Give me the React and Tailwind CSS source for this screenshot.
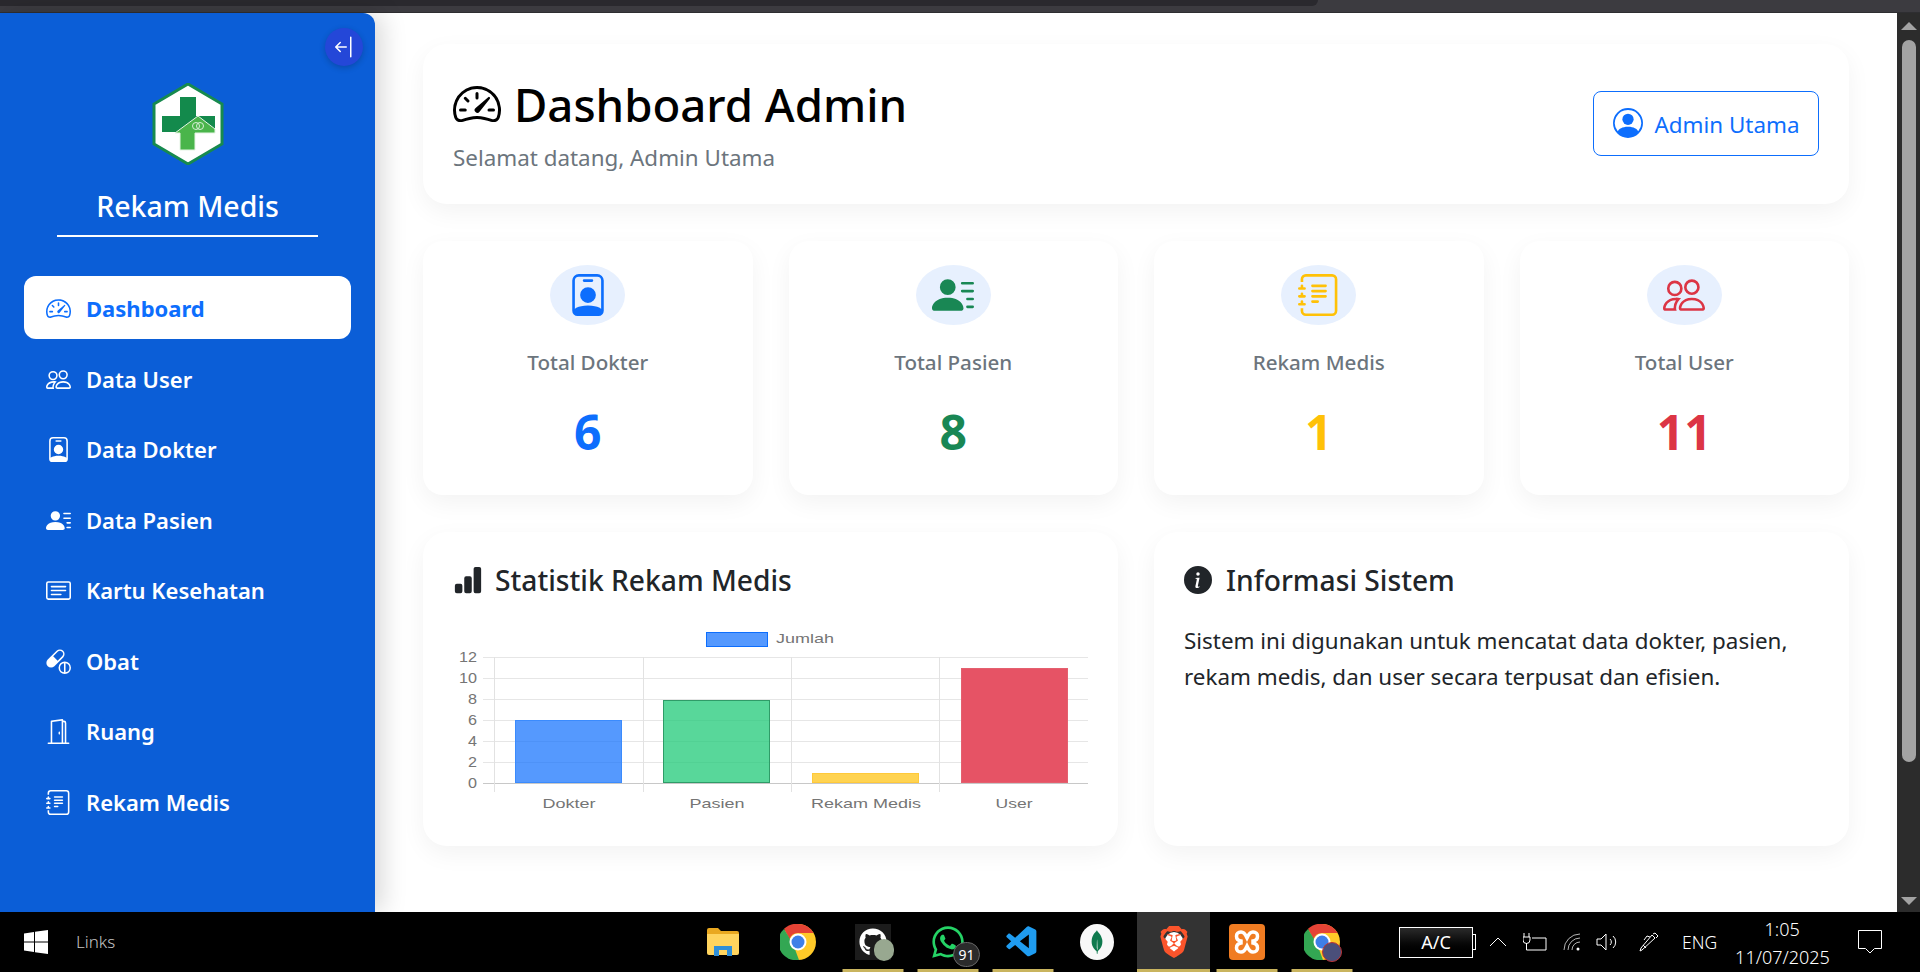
import React from 'react';
import {
  BsArrowBarLeft,
  BsBarChartFill,
  BsCapsulePill,
  BsCardText,
  BsDoorOpen,
  BsInfoCircleFill,
  BsJournalText,
  BsPeople,
  BsPersonBadge,
  BsPersonCircle,
  BsPersonLinesFill,
  BsSpeedometer2,
} from 'react-icons/bs';
import { FaGithub, FaWhatsapp } from 'react-icons/fa';
import { SiBrave, SiMongodb } from 'react-icons/si';
import { VscVscode } from 'react-icons/vsc';

const menu = [
  { label: 'Dashboard', icon: BsSpeedometer2, active: true },
  { label: 'Data User', icon: BsPeople },
  { label: 'Data Dokter', icon: BsPersonBadge },
  { label: 'Data Pasien', icon: BsPersonLinesFill },
  { label: 'Kartu Kesehatan', icon: BsCardText },
  { label: 'Obat', icon: BsCapsulePill },
  { label: 'Ruang', icon: BsDoorOpen },
  { label: 'Rekam Medis', icon: BsJournalText },
];

const stats = [
  { label: 'Total Dokter', value: '6', icon: BsPersonBadge, color: 'text-[#0d6efd]' },
  { label: 'Total Pasien', value: '8', icon: BsPersonLinesFill, color: 'text-[#198754]' },
  { label: 'Rekam Medis', value: '1', icon: BsJournalText, color: 'text-[#ffc107]' },
  { label: 'Total User', value: '11', icon: BsPeople, color: 'text-[#dc3545]' },
];

const cardShadow = 'shadow-[0_8px_24px_rgba(0,0,0,0.05)]';

const Logo = () => (
  <svg viewBox="0 0 72 82" className="w-[72px] h-[82px]">
    <polygon points="36,1 70,21 70,61 36,81 2,61 2,21" fill="#fff" stroke="#178a4e" strokeWidth="3" />
    <path d="M28 14h16v19h19v16H10V33h18z" fill="#138a4c" />
    <path d="M46 33l17 13v4H43v17H28V50h-5z" fill="#4ab54b" stroke="#e4f4e4" strokeWidth="1" />
    <circle cx="44" cy="43" r="3.500" fill="none" stroke="#d7efd7" strokeWidth="1" />
    <circle cx="48" cy="43" r="3.500" fill="none" stroke="#d7efd7" strokeWidth="1" />
  </svg>
);

const Sidebar = () => (
  <aside className="relative w-[375px] h-full shrink-0 bg-[#0b5ed7] rounded-tr-[12px] shadow-[8px_0_24px_rgba(0,0,0,0.15)] z-10 flex flex-col items-center pt-[70px]">
    <button className="absolute top-[15px] right-[12px] w-[38px] h-[38px] rounded-full bg-[#2447d8] text-white flex items-center justify-center shadow-[0_2px_6px_rgba(0,0,0,0.2)]">
      <BsArrowBarLeft className="w-[24px] h-[24px]" />
    </button>
    <Logo />
    <h1 className="mt-[22px] text-[28.5px] leading-[38px] font-medium text-white">Rekam Medis</h1>
    <div className="mt-[10px] w-[261px] h-[2px] bg-white" />
    <nav className="mt-[39px] w-[327px] flex flex-col gap-[7.5px]">
      {menu.map((item) => {
        const Icon = item.icon;
        return (
          <a
            key={item.label}
            className={`h-[63px] rounded-[12px] pl-[22px] pt-[2px] flex items-center gap-[15px] text-[22px] ${
              item.active ? 'bg-white text-[#0d6efd] font-bold' : 'text-white font-semibold'
            }`}
          >
            <Icon className="w-[25px] h-[25px] shrink-0" />
            <span>{item.label}</span>
          </a>
        );
      })}
    </nav>
  </aside>
);

const StatCard = ({ label, value, icon: Icon, color }) => (
  <div className={`h-[254px] bg-white rounded-[20px] ${cardShadow} flex flex-col items-center pt-[24px]`}>
    <div className={`w-[75px] h-[60px] rounded-[50%] bg-[#e7f0fe] flex items-center justify-center ${color}`}>
      <Icon className="w-[42px] h-[42px]" />
    </div>
    <div className="mt-[21px] text-[20.6px] leading-[32px] font-medium text-[#6c757d]">{label}</div>
    <div className={`mt-[22px] text-[48px] leading-[64px] font-bold ${color}`}>{value}</div>
  </div>
);

const chartLabels = [
  { text: 'Dokter', x: 569, width: 53 },
  { text: 'Pasien', x: 717, width: 55 },
  { text: 'Rekam Medis', x: 866, width: 110 },
  { text: 'User', x: 1014, width: 37 },
];

const bars = [
  { x: 515, top: 720, fill: 'rgba(13,110,253,0.7)', stroke: '#3b8bfd' },
  { x: 663, top: 700, fill: 'rgba(32,201,120,0.75)', stroke: '#2f9c68' },
  { x: 812, top: 773, fill: 'rgba(255,193,7,0.7)', stroke: '#ffc93a' },
  { x: 961, top: 668, fill: '#e65365', stroke: '#e4606f' },
];

// canvas is stretched wide in the picture, so text widths are set by hand
const BarChart = () => {
  const yTicks = [12, 10, 8, 6, 4, 2, 0];
  return (
    <svg viewBox="455 625 640 195" className="w-[640px] h-[195px] block">
      {yTicks.map((tick, i) => {
        const y = 657 + i * 21;
        return (
          <g key={tick}>
            <line x1="483" x2="1088" y1={y + 0.5} y2={y + 0.5} stroke={tick === 0 ? '#c8c8c8' : '#e6e6e6'} strokeWidth="1" />
            <text
              x="477"
              y={y + 5}
              textAnchor="end"
              fontSize="14.5"
              fill="#757575"
              fontFamily="'Liberation Sans', Arial, sans-serif"
              textLength={tick >= 10 ? 18 : 9}
              lengthAdjust="spacingAndGlyphs"
            >
              {tick}
            </text>
          </g>
        );
      })}
      {[494, 643, 791, 939].map((x) => (
        <line key={x} x1={x + 0.5} x2={x + 0.5} y1="657" y2="792" stroke="#e2e2e2" strokeWidth="1" />
      ))}
      {bars.map((bar) => (
        <rect
          key={bar.x}
          x={bar.x + 0.5}
          y={bar.top + 0.5}
          width="106"
          height={783 - bar.top - 1}
          fill={bar.fill}
          stroke={bar.stroke}
          strokeWidth="1"
        />
      ))}
      {chartLabels.map((label) => (
        <text
          key={label.text}
          x={label.x}
          y="808"
          textAnchor="middle"
          fontSize="13.5"
          fill="#757575"
          fontFamily="'Liberation Sans', Arial, sans-serif"
          textLength={label.width}
          lengthAdjust="spacingAndGlyphs"
        >
          {label.text}
        </text>
      ))}
      <rect x="706.5" y="632.5" width="61" height="14" fill="rgba(13,110,253,0.7)" stroke="#0d6efd" strokeWidth="1" />
      <text
        x="776"
        y="643"
        fontSize="13.5"
        fill="#757575"
        fontFamily="'Liberation Sans', Arial, sans-serif"
        textLength="58"
        lengthAdjust="spacingAndGlyphs"
      >
        Jumlah
      </text>
    </svg>
  );
};

const Main = () => (
  <main className="flex-1 min-w-0 bg-white px-[48px] pt-[31px]">
    <header className={`h-[160px] bg-white rounded-[24px] ${cardShadow} pl-[30px] pr-[30px] flex items-center justify-between`}>
      <div>
        <div className="flex items-center gap-[13px] text-black">
          <BsSpeedometer2 className="w-[48px] h-[48px]" />
          <h2 className="text-[45.6px] leading-[58px] font-medium">Dashboard Admin</h2>
        </div>
        <p className="mt-[9px] text-[22.4px] leading-[32px] text-[#6c757d]">Selamat datang, Admin Utama</p>
      </div>
      <button className="mb-[2px] w-[226px] h-[65px] border border-[#0d6efd] rounded-[8px] flex items-center justify-center gap-[12px] text-[#0d6efd] text-[22.4px]">
        <BsPersonCircle className="w-[30px] h-[30px]" />
        <span className="pt-[3px]">Admin Utama</span>
      </button>
    </header>

    <section className="mt-[37px] grid grid-cols-4 gap-[36px]">
      {stats.map((stat) => (
        <StatCard key={stat.label} {...stat} />
      ))}
    </section>

    <section className="mt-[37px] grid grid-cols-2 gap-[36px]">
      <div className={`h-[314px] bg-white rounded-[24px] ${cardShadow} pl-[30px] pt-[28px]`}>
        <div className="flex items-center gap-[12px] text-[#212529]">
          <BsBarChartFill className="w-[30px] h-[30px]" />
          <h3 className="text-[28.2px] leading-[40px] font-medium">Statistik Rekam Medis</h3>
        </div>
        <div className="mt-[25px] ml-[2px]">
          <BarChart />
        </div>
      </div>
      <div className={`h-[314px] bg-white rounded-[24px] ${cardShadow} px-[30px] pt-[28px]`}>
        <div className="flex items-center gap-[14px] text-[#212529]">
          <BsInfoCircleFill className="w-[28px] h-[28px]" />
          <h3 className="text-[28.2px] leading-[40px] font-medium">Informasi Sistem</h3>
        </div>
        <p className="mt-[23px] text-[22.4px] leading-[36px] text-[#212529]">
          Sistem ini digunakan untuk mencatat data dokter, pasien, rekam medis, dan user secara terpusat dan efisien.
        </p>
      </div>
    </section>
  </main>
);

const Scrollbar = () => (
  <div className="w-[23px] h-full shrink-0 bg-[#2c2c2c] flex flex-col items-center pt-[9px] pb-[7px]">
    <div className="w-0 h-0 border-x-[8px] border-x-transparent border-b-[8px] border-b-[#a3a3a3]" />
    <div className="mt-[10px] w-[14px] h-[722px] rounded-full bg-[#a3a3a3]" />
    <div className="mt-auto w-0 h-0 border-x-[8px] border-x-transparent border-t-[8px] border-t-[#a3a3a3]" />
  </div>
);

const Explorer = () => (
  <svg viewBox="0 0 32 28" className="w-[32px] h-[28px]">
    <path d="M0 2a2 2 0 0 1 2-2h9l3 3h16a2 2 0 0 1 2 2v4H0z" fill="#e9a820" />
    <path d="M0 6h32v19a2 2 0 0 1-2 2H2a2 2 0 0 1-2-2z" fill="#ffd45e" />
    <path d="M7 18h18v10h-5v-6h-8v6H7z" fill="#2f8fd8" />
  </svg>
);

const Chrome = ({ badge }) => (
  <span className="relative block w-[36px] h-[36px]">
    <svg viewBox="0 0 36 36" className="w-[36px] h-[36px]">
      <circle cx="18" cy="18" r="18" fill="#ffc928" />
      <path d="M18 0a18 18 0 0 1 15.6 9H18a9 9 0 0 0-8.500 6L4 4.800A18 18 0 0 1 18 0z" fill="#e54335" />
      <path d="M4 5l9 15 6 16A18 18 0 0 1 4 5z" fill="#33a753" />
      <circle cx="18" cy="18" r="8.500" fill="#fff" />
      <circle cx="18" cy="18" r="6.500" fill="#3f7fe8" />
    </svg>
    {badge && <span className="absolute right-[-2px] bottom-[-2px] w-[20px] h-[20px] rounded-full bg-[#4a4f7a] border border-[#b33]" />}
  </span>
);

const Xampp = () => (
  <svg viewBox="0 0 36 36" className="w-[36px] h-[36px]">
    <rect width="36" height="36" rx="4" fill="#f07c22" />
    <path d="M12 8c-6 0-6 8 0 9v2c-6 1-6 9 0 9 4 0 5-4 6-6 1 2 2 6 6 6 6 0 6-8 0-9v-2c6-1 6-9 0-9-4 0-5 4-6 6-1-2-2-6-6-6z" fill="none" stroke="#fff" strokeWidth="3.500" />
  </svg>
);

const taskApps = [
  { id: 'explorer', node: <Explorer />, width: 'w-[32px]', ml: 'ml-[27px]', line: false },
  { id: 'chrome', node: <Chrome />, width: 'w-[36px]', ml: 'ml-[41px]', line: false },
  {
    id: 'github',
    node: (
      <span className="relative flex items-center justify-center w-[36px] h-[36px] bg-[#1c1c1c] text-white">
        <FaGithub className="w-[28px] h-[28px]" />
        <span className="absolute right-[-3px] bottom-[-1px] w-[20px] h-[22px] rounded-full bg-[#98a890]" />
      </span>
    ),
    width: 'w-[36px]',
    ml: 'ml-[39px]',
    line: true,
  },
  {
    id: 'whatsapp',
    node: (
      <span className="relative block w-[36px] h-[36px] text-[#25d366]">
        <FaWhatsapp className="w-[36px] h-[36px]" />
        <span className="absolute right-[-14px] bottom-[-7px] w-[27px] h-[25px] rounded-full bg-[#2b2b2b] border border-[#666] text-white text-[14px] leading-[23px] text-center">
          91
        </span>
      </span>
    ),
    width: 'w-[36px]',
    ml: 'ml-[39px]',
    line: true,
  },
  { id: 'vscode', node: <VscVscode className="w-[37px] h-[37px] text-[#1f9cf0]" />, width: 'w-[37px]', ml: 'ml-[38px]', line: true },
  {
    id: 'mongo',
    node: (
      <span className="flex items-center justify-center w-[34px] h-[36px] rounded-[50%] bg-[#f8f8f8] text-[#0f7a4e]">
        <SiMongodb className="w-[24px] h-[24px]" />
      </span>
    ),
    width: 'w-[34px]',
    ml: 'ml-[39px]',
    line: false,
  },
];

const TrayIcons = () => (
  <>
    <svg viewBox="0 0 18 10" className="ml-[13px] w-[18px] h-[10px] text-white" fill="none" stroke="currentColor" strokeWidth="1">
      <path d="M1 9l8-8 8 8" />
    </svg>
    <svg viewBox="0 0 24 18" className="ml-[16px] w-[24px] h-[18px] text-white" fill="none" stroke="currentColor" strokeWidth="1">
      <path d="M1 0v4M6 0v4M0 4h7v3a3 3 0 0 1-7 0zM3.500 10v7H23V5H9" />
    </svg>
    <svg viewBox="0 0 18 18" className="ml-[16px] w-[18px] h-[18px] text-white" fill="none" stroke="currentColor" strokeWidth="1">
      <path d="M1 17A16 16 0 0 1 17 1M5 17A12 12 0 0 1 17 5M9 17a8 8 0 0 1 8-8" opacity="0.7" />
      <circle cx="15" cy="16" r="1.500" fill="currentColor" stroke="none" />
    </svg>
    <svg viewBox="0 0 22 18" className="ml-[15px] w-[22px] h-[18px] text-white" fill="none" stroke="currentColor" strokeWidth="1">
      <path d="M1 6h4l5-5v16l-5-5H1zM14 6a4 4 0 0 1 0 6M17 3a8 8 0 0 1 0 12" />
    </svg>
    <svg viewBox="0 0 20 20" className="ml-[21px] w-[20px] h-[20px] text-white" fill="none" stroke="currentColor" strokeWidth="1">
      <path d="M3 18l-2 1 1-3L13 3l3 3zM11 5l-3-1-3 4M4 13l3 3M14 2l2-1 3 3-2 2" />
    </svg>
  </>
);

const Taskbar = () => (
  <footer className="h-[60px] shrink-0 bg-black text-white flex items-stretch">
    <div className="w-[680px] shrink-0 flex items-center pl-[24px]">
      <svg viewBox="0 0 24 24" className="w-[24px] h-[24px]" fill="#fff">
        <path d="M0 3.400 10 2v9.500H0zM11 1.800 24 0v11.500H11zM0 12.500h10V22L0 20.600zM11 12.500h13V24l-13-1.800z" />
      </svg>
      <span className="ml-[28px] text-[17px] font-light text-[#c4c4c4]">Links</span>
    </div>
    {taskApps.map((app) => (
      <div key={app.id} className={`relative ${app.width} ${app.ml} flex items-center justify-center shrink-0`}>
        {app.node}
        {app.line && <span className="absolute left-1/2 -translate-x-1/2 bottom-0 w-[61px] h-[3px] bg-[#c9b45e]" />}
      </div>
    ))}
    <div className="relative ml-[23px] w-[73px] shrink-0 bg-[#333] flex items-center justify-center">
      <span className="absolute w-[18px] h-[20px] rounded-full bg-white" />
      <SiBrave className="relative w-[32px] h-[36px] text-[#fb542b]" />
      <span className="absolute inset-x-0 bottom-0 h-[3px] bg-[#c9b45e]" />
    </div>
    <div className="relative ml-[19px] w-[36px] shrink-0 flex items-center justify-center">
      <Xampp />
      <span className="absolute left-1/2 -translate-x-1/2 bottom-0 w-[61px] h-[3px] bg-[#c9b45e]" />
    </div>
    <div className="relative ml-[39px] w-[36px] shrink-0 flex items-center justify-center">
      <Chrome badge />
      <span className="absolute left-1/2 -translate-x-1/2 bottom-0 w-[61px] h-[3px] bg-[#c9b45e]" />
    </div>
    <div className="ml-[59px] flex-1 flex items-center">
      <div className="flex items-center">
        <div className="w-[74px] h-[31px] border border-white bg-gradient-to-b from-[#2b2b2b] to-black text-[18px] leading-[29px] text-center">A/C</div>
        <div className="w-[3px] h-[16px] border-y border-r border-white" />
      </div>
      <TrayIcons />
      <span className="ml-[23px] text-[17.500px] font-light text-white">ENG</span>
      <div className="ml-[18px] w-[94px] pt-[2px] text-center text-[18px] font-light text-white leading-[28px]">
        <div>1:05</div>
        <div className="whitespace-nowrap">11/07/2025</div>
      </div>
      <svg viewBox="0 0 24 24" className="ml-[29px] w-[24px] h-[24px] text-white" fill="none" stroke="currentColor" strokeWidth="1">
        <path d="M.500.500h23v18h-7l-4.500 4.500-4.500-4.500h-7z" />
      </svg>
    </div>
  </footer>
);

const App = () => {
  return (
    <div className="w-[1920px] h-[972px] overflow-hidden flex flex-col bg-white font-['Noto_Sans',sans-serif]">
      <div className="h-[13px] shrink-0 bg-[#3c3b40] border-b border-[#2e2e31]">
        <div className="w-[1318px] h-[6px] bg-[#2a292e] rounded-br-[8px]" />
      </div>
      <div className="flex-1 min-h-0 flex">
        <Sidebar />
        <Main />
        <Scrollbar />
      </div>
      <Taskbar />
    </div>
  );
};

export default App;
